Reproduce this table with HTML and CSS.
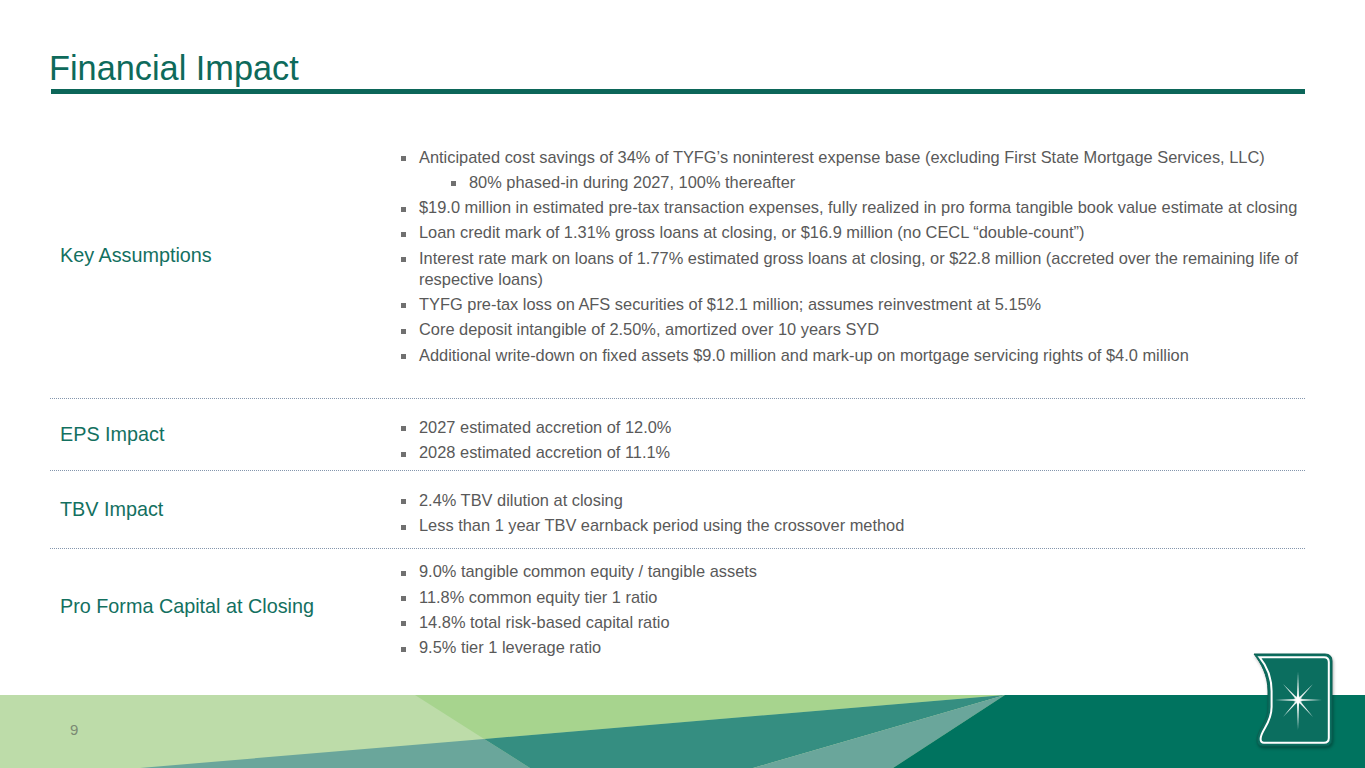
FILE: index.html
```html
<!DOCTYPE html>
<html lang="en">
<head>
<meta charset="utf-8">
<title>Financial Impact</title>
<link rel="stylesheet" href="styles.css">
</head>
<body>
<div class="slide">
  <header class="head">
    <h1 class="title">Financial Impact</h1>
    <div class="rule"></div>
  </header>

  <main class="table">
    <section class="row row-key">
      <div class="label">Key Assumptions</div>
      <ul class="items">
        <li>Anticipated cost savings of 34% of TYFG’s noninterest expense base (excluding First State Mortgage Services, LLC)</li>
        <li class="sub">80% phased-in during 2027, 100% thereafter</li>
        <li>$19.0 million in estimated pre-tax transaction expenses, fully realized in pro forma tangible book value estimate at closing</li>
        <li>Loan credit mark of 1.31% gross loans at closing, or $16.9 million (no CECL “double-count”)</li>
        <li>Interest rate mark on loans of 1.77% estimated gross loans at closing, or $22.8 million (accreted over the remaining life of respective loans)</li>
        <li>TYFG pre-tax loss on AFS securities of $12.1 million; assumes reinvestment at 5.15%</li>
        <li>Core deposit intangible of 2.50%, amortized over 10 years SYD</li>
        <li>Additional write-down on fixed assets $9.0 million and mark-up on mortgage servicing rights of $4.0 million</li>
      </ul>
    </section>
    <section class="row row-eps">
      <div class="label">EPS Impact</div>
      <ul class="items">
        <li>2027 estimated accretion of 12.0%</li>
        <li>2028 estimated accretion of 11.1%</li>
      </ul>
    </section>
    <section class="row row-tbv">
      <div class="label">TBV Impact</div>
      <ul class="items">
        <li>2.4% TBV dilution at closing</li>
        <li>Less than 1 year TBV earnback period using the crossover method</li>
      </ul>
    </section>
    <section class="row row-cap">
      <div class="label">Pro Forma Capital at Closing</div>
      <ul class="items">
        <li>9.0% tangible common equity / tangible assets</li>
        <li>11.8% common equity tier 1 ratio</li>
        <li>14.8% total risk-based capital ratio</li>
        <li>9.5% tier 1 leverage ratio</li>
      </ul>
    </section>
  </main>

  <footer class="foot">
    <svg class="foot-art" viewBox="0 0 1365 73" preserveAspectRatio="none" aria-hidden="true">
      <rect x="0" y="0" width="1365" height="73" fill="#bddca9"/>
      <polygon points="415,0 1005,0 484.2,43.9" fill="#a7d48e"/>
      <polygon points="140,73 484.2,43.9 530,73" fill="#6aa69b"/>
      <polygon points="484.2,43.9 1005,0 753,73 530,73" fill="#358e81"/>
      <polygon points="1005,0 893,73 753,73" fill="#6aa69b"/>
      <polygon points="1005,0 1365,0 1365,73 893,73" fill="#00735f"/>
    </svg>
    <span class="pgnum">9</span>
  </footer>

  <svg class="logo" viewBox="0 0 84 100" aria-hidden="true">
    <defs>
      <radialGradient id="glow" cx="50%" cy="50%" r="50%">
        <stop offset="0" stop-color="#ffffff" stop-opacity="1"/>
        <stop offset="0.5" stop-color="#ffffff" stop-opacity="0.7"/>
        <stop offset="1" stop-color="#ffffff" stop-opacity="0"/>
      </radialGradient>
    </defs>
    <path d="M3,3 H74 Q81,3 81,10 V88 Q81,95 74,95 H12 Q6,95 6,89 C6,78 17,72 17,56 V40 C17,24 10,12 3,3 Z" fill="#0b6e5f" stroke="#0a5f52" stroke-width="1"/>
    <path d="M8.5,6.2 H73 Q77.8,6.2 77.8,11 V87 Q77.8,91.8 73,91.8 H13 Q9.6,91.8 9.6,88 C9.6,79 20.6,73 20.6,56 V40 C20.6,25 14.5,13.5 8.5,6.2 Z" fill="none" stroke="#ffffff" stroke-width="2"/>
    <polygon points="47,21 48.1,49 47,79 45.9,49" fill="#ffffff"/>
    <polygon points="24,49 47,47.9 71,49 47,50.1" fill="#ffffff"/>
    <polygon points="32,33 47.8,48.3 62,66 46.2,49.7" fill="#ffffff" opacity="0.9"/>
    <polygon points="62,33 47.7,49.7 32,66 46.3,48.3" fill="#ffffff" opacity="0.9"/>
    <circle cx="47" cy="49" r="5" fill="url(#glow)"/>
  </svg>
</div>
</body>
</html>
```

FILE: styles.css
```css
html, body {
  margin: 0;
  padding: 0;
  background: #ffffff;
}

body {
  font-family: "Liberation Sans", Arial, sans-serif;
}

.slide {
  position: relative;
  width: 1365px;
  height: 768px;
  overflow: hidden;
  display: flex;
  flex-direction: column;
}

.head {
  padding-top: 48px;
}

.title {
  margin: 0 0 0 49px;
  font-size: 34.3px;
  line-height: 40px;
  font-weight: normal;
  color: #0e6a5b;
}

.rule {
  margin: 1px 0 0 51px;
  width: 1254px;
  height: 5px;
  background: #0c6659;
}

.table {
  flex: 1;
  margin: 18px 0 0 50px;
  width: 1255px;
}

.row {
  display: grid;
  grid-template-columns: 351px 1fr;
  align-items: center;
}

.row-key,
.row-eps,
.row-tbv {
  border-bottom: 1px dotted #8496ad;
}

.row-key .items {
  padding: 34.5px 0 32.4px;
}

.row-eps .items {
  padding: 18px 0 6.5px;
}

.row-tbv .items {
  padding: 19.2px 0 11.3px;
}

.row-cap .items {
  padding: 12.7px 0 5px;
}

.label {
  padding-left: 10px;
  font-size: 19.8px;
  line-height: 24px;
  color: #13705f;
}

.items {
  list-style: none;
  margin: 0;
}

.items li {
  display: flex;
  font-size: 16.4px;
  line-height: 21px;
  color: #595959;
  margin-bottom: 4.3px;
}

.items li:last-child {
  margin-bottom: 0;
}

.items li::before {
  content: "";
  flex: 0 0 auto;
  width: 5px;
  height: 5px;
  margin-top: 9.5px;
  margin-right: 13px;
  background: #707070;
}

.items li.sub {
  padding-left: 50px;
}

.foot {
  position: relative;
  height: 73px;
  flex: 0 0 73px;
  padding: 26px 0 0 70px;
  box-sizing: border-box;
}

.foot-art {
  position: absolute;
  left: 0;
  top: 0;
  width: 1365px;
  height: 73px;
  display: block;
}

.pgnum {
  position: relative;
  font-size: 15px;
  line-height: 17px;
  color: #7b8a74;
}

.logo {
  position: absolute;
  left: 1251px;
  top: 651px;
  width: 84px;
  height: 100px;
  filter: drop-shadow(1px 2px 1.5px rgba(0, 0, 0, 0.3));
}
```
